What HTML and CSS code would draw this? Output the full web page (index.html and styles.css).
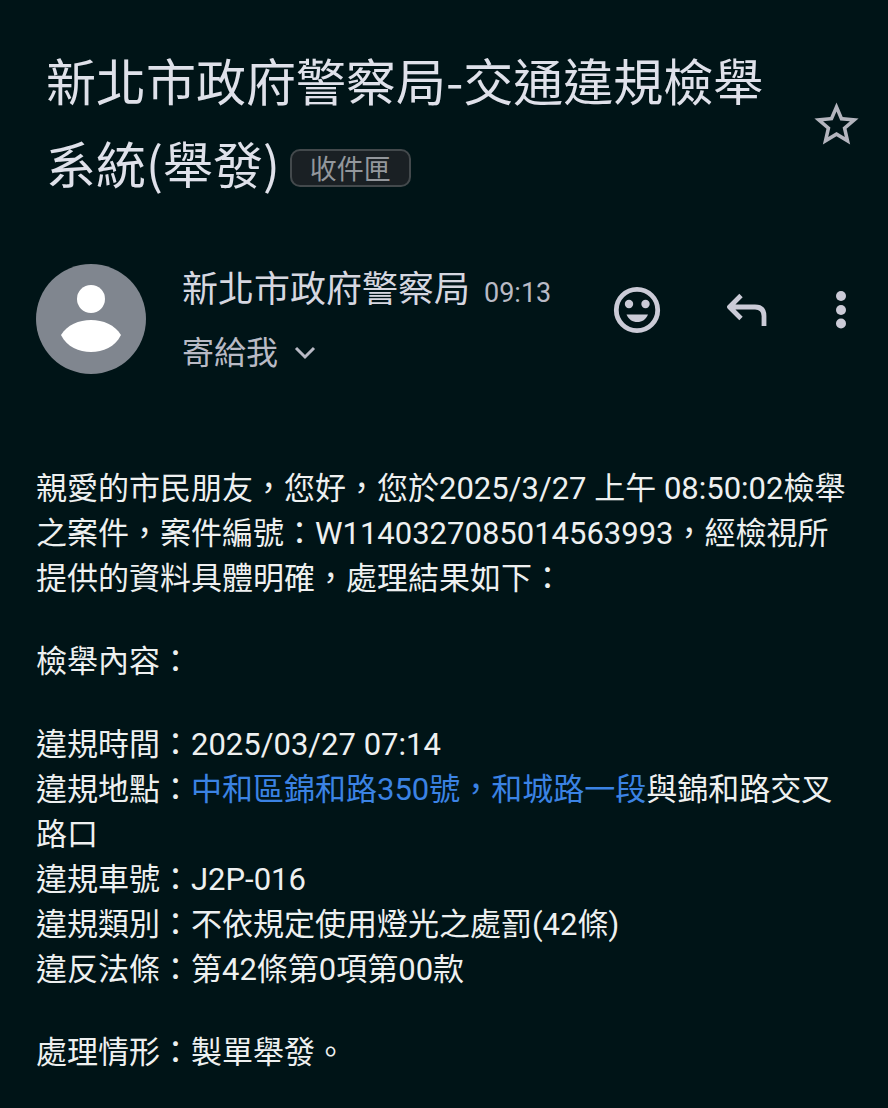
FILE: index.html
```html
<!DOCTYPE html>
<html lang="zh-Hant">
<head>
  <meta charset="UTF-8" />
  <meta name="viewport" content="width=device-width, initial-scale=1" />
  <title>新北市政府警察局-交通違規檢舉系統(舉發)</title>
  <link rel="stylesheet" href="styles.css">
</head>
<body>
  <header class="subject">
    <h1>新北市政府警察局-交通違規檢舉系統(舉發)<span class="label">收件匣</span></h1>
    <button type="button" class="star" aria-label="加上星號">
      <svg viewBox="0 0 24 24" width="53" height="53"><path fill="currentColor" d="M22 9.24l-7.19-.62L12 2 9.19 8.63 2 9.24l5.46 4.73L5.82 21 12 17.27 18.18 21l-1.63-7.03L22 9.24zM12 15.4l-3.76 2.27 1-4.28-3.32-2.88 4.38-.38L12 6.1l1.71 4.04 4.38.38-3.32 2.88 1 4.28L12 15.4z"/></svg>
    </button>
  </header>

  <section class="sender">
    <svg class="avatar" viewBox="0 0 110 110" width="110" height="110" aria-hidden="true">
      <circle cx="55" cy="55" r="55" fill="#80868f"/>
      <circle cx="55" cy="35" r="14" fill="#fff"/>
      <path fill="#fff" d="M25 71C31 61 43 56 55 56s24 5 30 15C79 83 67 88 55 88S31 83 25 71z"/>
    </svg>
    <div class="who">
      <div class="from"><span class="name">新北市政府警察局</span><time>09:13</time></div>
      <button type="button" class="to">寄給我
        <svg viewBox="0 0 24 24" width="24" height="24" fill="none" stroke="currentColor" stroke-width="3"><path d="M3 7l9 9 9-9"/></svg>
      </button>
    </div>
    <div class="actions">
      <button type="button" aria-label="新增表情符號回應">
        <svg viewBox="0 0 56 56" width="56" height="56">
          <circle cx="28" cy="28" r="20.7" fill="none" stroke="currentColor" stroke-width="4.8"/>
          <circle cx="20" cy="22" r="4.2" fill="currentColor"/>
          <circle cx="36.5" cy="22" r="4.2" fill="currentColor"/>
          <path fill="currentColor" d="M17.500 32.500h21.500c-2 5-6 7.500-10.700 7.500s-8.800-2.500-10.800-7.500z"/>
        </svg>
      </button>
      <button type="button" aria-label="回覆">
        <svg viewBox="0 0 56 56" width="56" height="56" fill="none" stroke="currentColor" stroke-width="4.8" stroke-linejoin="round"><path d="M22 13.500L10.500 25 22 36.500M10.500 25H36q9 0 9 9v10"/></svg>
      </button>
      <button type="button" aria-label="更多選項">
        <svg viewBox="0 0 24 56" width="24" height="56" fill="currentColor"><circle cx="12" cy="14" r="5"/><circle cx="12" cy="28" r="5"/><circle cx="12" cy="41.500" r="5"/></svg>
      </button>
    </div>
  </section>

  <main class="message">
    <p>親愛的市民朋友，您好，您於2025/3/27 上午 08:50:02檢舉之案件，案件編號：W1140327085014563993，經檢視所提供的資料具體明確，處理結果如下：</p>
    <p>檢舉內容：</p>
    <p>
      違規時間：2025/03/27 07:14<br>
      違規地點：<a href="#">中和區錦和路350號，和城路一段</a>與錦和路交叉路口<br>
      違規車號：J2P-016<br>
      違規類別：不依規定使用燈光之處罰(42條)<br>
      違反法條：第42條第0項第00款
    </p>
    <p>處理情形：製單舉發。</p>
  </main>
</body>
</html>
```
FILE: styles.css
```css
* { box-sizing: border-box; }
body { margin: 0; background-color: #001417; color: #eef0f0; font-family: Roboto, 'Noto Sans CJK TC', sans-serif; }
button { display: flex; align-items: center; padding: 0; border: none; background: none; color: inherit; font: inherit; cursor: pointer; }
svg { display: block; flex: none; }

.subject { display: flex; align-items: center; gap: 24px; padding: 38px 25px 0 46px; }
h1 { flex: 1; margin: 0; font-family: 'Noto Sans CJK TC', sans-serif; font-size: 50px; line-height: 83px; font-weight: 400; color: #dfe1ea; }
.label { display: inline-block; margin-left: 10px; padding: 0 18px; border: 2px solid #43494c; border-radius: 10px; background-color: #1a2024; color: #93979c; font-size: 27px; line-height: 34px; vertical-align: 5px; }
.star { padding-top: 6px; color: #b4b5be; }

.sender { display: flex; align-items: flex-start; padding: 60px 35px 0 36px; }
.who { flex: 1; margin-left: 36px; white-space: nowrap; }
.from { display: flex; align-items: baseline; gap: 14px; line-height: 52px; color: #d6d7e0; }
.name { font-size: 36px; }
time { font-size: 27px; color: #b9bac5; }
.to { gap: 15px; margin-top: 8px; font-size: 32px; line-height: 52px; color: #b9bac5; }
.actions { display: flex; gap: 54px; margin-top: 18px; color: #cbcbd7; }

.message { padding: 87px 36px 36px; font-size: 31px; line-height: 45px; }
.message p { margin: 0 0 38px; }
.message a { color: #3b83e4; text-decoration: none; }
```
